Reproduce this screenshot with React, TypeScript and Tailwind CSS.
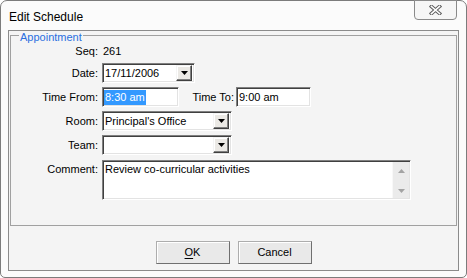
import React from 'react'

const SUNKEN =
  'border border-t-[#808080] border-l-[#808080] border-b-white border-r-white shadow-[inset_1px_1px_0_#404040,inset_-1px_-1px_0_#e3e3e3] bg-white'

function DropBtn() {
  return (
    <div className="ml-auto mr-[2px] flex h-[16px] w-[16px] items-center justify-center border border-t-[#f4f4f4] border-l-[#f4f4f4] border-b-[#404040] border-r-[#404040] bg-[#ebe9e5] shadow-[inset_-1px_-1px_0_#808080,inset_1px_1px_0_#ffffff]">
      <svg width="7" height="4" viewBox="0 0 7 4">
        <path d="M0 0h7L3.5 4z" fill="#000" />
      </svg>
    </div>
  )
}

function Combo({ w, value }: { w: string; value: string }) {
  return (
    <div className={`flex h-[20px] items-center ${w} ${SUNKEN}`}>
      <span className="pl-[2px] leading-[13px]">{value}</span>
      <DropBtn />
    </div>
  )
}

function Row({ label, mt, children }: { label: string; mt: string; children: React.ReactNode }) {
  return (
    <div className={`flex h-[20px] items-center ${mt}`}>
      <span className="w-[87px] text-right leading-[13px]">{label}</span>
      <div className="ml-[4px] flex items-center">{children}</div>
    </div>
  )
}

export default function App() {
  return (
    <div className="h-[278px] w-[467px] bg-white font-['Liberation_Sans',Arial,sans-serif] text-[11px] text-black">
      <div className="flex h-full flex-col rounded-t-[7px] rounded-b-[5px] border border-[#7c7c7c] bg-[#fbfbfb]">
        {/* title bar */}
        <div className="flex h-[29px] shrink-0 items-start">
          <span className="ml-[8px] mt-[9px] text-[12px] leading-[14px]">Edit Schedule</span>
          <button className="ml-auto mr-[9px] -mt-px flex h-[20px] w-[43px] items-center justify-center rounded-b-[4px] border border-[#8a8a8a] bg-[#f6f6f6]">
            <svg width="13" height="10" viewBox="0 0 13 10">
              <path d="M2.5 1.5l8 7M10.5 1.5l-8 7" stroke="#5f5f5f" strokeWidth="3.6" strokeLinecap="square" />
              <path d="M2.5 1.5l8 7M10.5 1.5l-8 7" stroke="#ffffff" strokeWidth="1.6" strokeLinecap="square" />
            </svg>
          </button>
        </div>

        {/* client area */}
        <div className="mx-[7px] flex h-[241px] flex-col border border-[#8b8b8b] bg-[#f4f4f4]">
          {/* Appointment group */}
          <div className="relative mx-px mt-[4px] h-[191px] border border-[#a0a0a0]">
            <span className="absolute left-[8px] -top-[5px] bg-[#f4f4f4] px-[1px] leading-[13px] text-[#2a6fe0]">
              Appointment
            </span>

            <Row label="Seq:" mt="mt-[5px]">
              <span className="pl-[1px] leading-[13px]">261</span>
            </Row>

            <Row label="Date:" mt="mt-[2px]">
              <Combo w="w-[93px]" value="17/11/2006" />
            </Row>

            <Row label="Time From:" mt="mt-[4px]">
              <div className={`flex h-[20px] w-[77px] items-center ${SUNKEN}`}>
                <span className="ml-[1px] bg-[#3399ff] pl-[1px] pr-[1px] leading-[15px] text-white">8:30 am</span>
              </div>
              <span className="w-[55px] text-right leading-[13px]">Time To:</span>
              <div className={`ml-[2px] flex h-[20px] w-[75px] items-center ${SUNKEN}`}>
                <span className="pl-[2px] leading-[13px]">9:00 am</span>
              </div>
            </Row>

            <Row label="Room:" mt="mt-[4px]">
              <Combo w="w-[130px]" value="Principal's Office" />
            </Row>

            <Row label="Team:" mt="mt-[4px]">
              <Combo w="w-[130px]" value="" />
            </Row>

            <div className="mt-[5px] flex items-start">
              <span className="w-[87px] pt-[3px] text-right leading-[13px]">Comment:</span>
              <div className={`ml-[4px] flex h-[40px] w-[309px] ${SUNKEN}`}>
                <div className="flex-1 pl-[2px] pt-[2px] leading-[13px]">Review co-curricular activities</div>
                <div className="mr-px my-px flex w-[17px] flex-col items-center justify-between border-l border-[#f8f8f8] bg-[#ebebeb] pt-[7px] pb-[5px]">
                  <svg width="7" height="4" viewBox="0 0 7 4">
                    <path d="M0 4h7L3.5 0z" fill="#a3a3a3" />
                  </svg>
                  <svg width="7" height="4" viewBox="0 0 7 4">
                    <path d="M0 0h7L3.5 4z" fill="#a3a3a3" />
                  </svg>
                </div>
              </div>
            </div>
          </div>

          {/* buttons */}
          <div className="flex flex-1 items-start justify-center gap-[8px] pt-[15px]">
            <button className="flex h-[23px] w-[74px] items-center justify-center border border-[#adadad] border-b-[#6f6f6f] border-r-[#6f6f6f] bg-[#e9e9e9] shadow-[inset_1px_1px_0_#ffffff]">
              <span className="leading-[13px]">
                <span className="underline underline-offset-2">O</span>K
              </span>
            </button>
            <button className="flex h-[23px] w-[74px] items-center justify-center border border-[#adadad] border-b-[#6f6f6f] border-r-[#6f6f6f] bg-[#e9e9e9] shadow-[inset_1px_1px_0_#ffffff]">
              <span className="leading-[13px]">Cancel</span>
            </button>
          </div>
        </div>
      </div>
    </div>
  )
}
